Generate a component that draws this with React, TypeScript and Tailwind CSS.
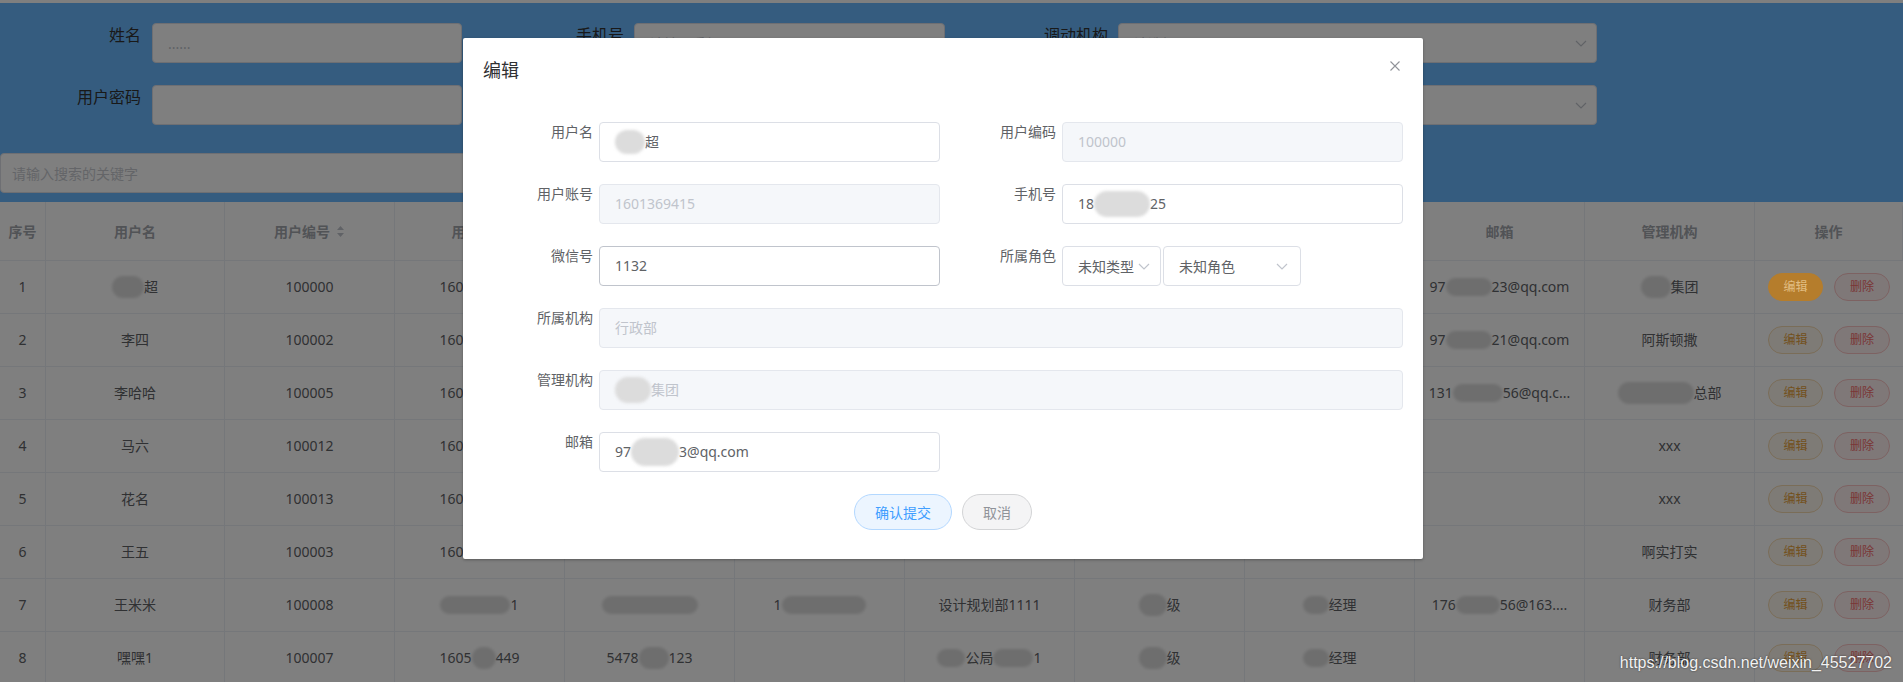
import React from "react";

type Cell = React.ReactNode;

function Blur({ w, h = "h-[18px]" }: { w: string; h?: string }) {
  return <span className={`inline-block shrink-0 rounded-full bg-[#dcdcdc] align-middle blur-[1.5px] ${w} ${h}`} />;
}

function Chevron() {
  return (
    <svg width="12" height="7" viewBox="0 0 12 7" className="shrink-0">
      <path d="M1 1l5 5 5-5" fill="none" stroke="#c0c4cc" strokeWidth="1.2" />
    </svg>
  );
}

function SortIcon() {
  return (
    <svg width="9" height="13" viewBox="0 0 9 13" className="ml-[6px]">
      <path d="M4.5 1L8 5H1z" fill="#c0c4cc" />
      <path d="M4.5 12L8 8H1z" fill="#c0c4cc" />
    </svg>
  );
}

function Field({ label, wide, children }: { label: string; wide?: boolean; children: React.ReactNode }) {
  return (
    <div className={`flex ${wide ? "w-[926px]" : "w-[463px]"}`}>
      <label className="w-[122px] shrink-0 pr-[6px] text-right leading-5 text-[#606266]">{label}</label>
      <div className="flex-1">{children}</div>
    </div>
  );
}

function Box({ disabled, dark, children }: { disabled?: boolean; dark?: boolean; children?: React.ReactNode }) {
  const tone = disabled
    ? "border-[#e4e7ed] bg-[#f5f7fa] text-[#c0c4cc]"
    : dark
    ? "border-[#c0c4cc] bg-white text-[#606266]"
    : "border-[#dcdfe6] bg-white text-[#606266]";
  return (
    <div className={`flex h-[40px] items-center whitespace-nowrap rounded-[4px] border px-[15px] leading-5 ${tone}`}>{children}</div>
  );
}

const headers = ["序号", "用户名", "用户编号", "用户账号", "微信号", "手机号", "所属机构", "用户类型", "用户角色", "邮箱", "管理机构", "操作"];

const rows: Cell[][] = [
  ["1", <><Blur w="w-[32px]" h="h-[22px]" />超</>, "100000", "1601369415", "1132", "181****25", "行政部", "未知类型", "未知角色", <>97<Blur w="w-[46px]" />23@qq.com</>, <><Blur w="w-[30px]" h="h-[22px]" />集团</>],
  ["2", "李四", "100002", "1601369416", "1133", "138****21", "行政部", "普通用户", "员工", <>97<Blur w="w-[46px]" />21@qq.com</>, "阿斯顿撒"],
  ["3", "李哈哈", "100005", "1601369418", "5563", "131****56", "人事部", "普通用户", "员工", <>131<Blur w="w-[50px]" />56@qq.c...</>, <><Blur w="w-[76px]" h="h-[22px]" />总部</>],
  ["4", "马六", "100012", "1601369420", "", "", "财务部", "普通用户", "员工", "", "xxx"],
  ["5", "花名", "100013", "1601369421", "", "", "财务部", "普通用户", "员工", "", "xxx"],
  ["6", "王五", "100003", "1601369417", "", "", "行政部", "普通用户", "员工", "", "啊实打实"],
  ["7", "王米米", "100008", <><Blur w="w-[70px]" />1</>, <Blur w="w-[96px]" />, <>1<Blur w="w-[84px]" /></>, "设计规划部1111", <><Blur w="w-[28px]" h="h-[22px]" />级</>, <><Blur w="w-[26px]" />经理</>, <>176<Blur w="w-[44px]" />56@163....</>, "财务部"],
  ["8", "嘿嘿1", "100007", <>1605<Blur w="w-[24px]" h="h-[22px]" />449</>, <>5478<Blur w="w-[30px]" h="h-[22px]" />123</>, "", <><Blur w="w-[28px]" />公局<Blur w="w-[40px]" />1</>, <><Blur w="w-[28px]" h="h-[22px]" />级</>, <><Blur w="w-[26px]" />经理</>, "", "财务部"],
];

const grid = "grid grid-cols-[46px_179px_repeat(9,170px)_148px]";

export default function App() {
  return (
    <div className="relative h-[682px] w-full overflow-hidden bg-white font-['Noto_Sans','Noto_Sans_CJK_SC',sans-serif] text-[14px]">
      <div className="h-[3px] bg-white" />

      {/* search area */}
      <div className="h-[199px] bg-[#6bb9ff] pt-[20px]">
        <div className="flex h-[40px]">
          <span className="w-[141px] text-right text-[16px] leading-6 text-[#333]">姓名</span>
          <div className="ml-[11px] flex w-[310px] items-center rounded-[4px] border border-[#dcdfe6] bg-white px-[15px] text-[#c0c4cc]">......</div>
          <span className="w-[162px] text-right text-[16px] leading-6 text-[#333]">手机号</span>
          <div className="ml-[10px] flex w-[311px] items-center rounded-[4px] border border-[#dcdfe6] bg-white px-[15px] text-[#c0c4cc]">请输入手机号码</div>
          <span className="w-[163px] text-right text-[16px] leading-6 text-[#333]">调动机构</span>
          <div className="ml-[10px] flex w-[479px] items-center justify-between rounded-[4px] border border-[#dcdfe6] bg-white pl-[15px] pr-[9px] text-[#c0c4cc]">
            请选择
            <Chevron />
          </div>
        </div>
        <div className="mt-[22px] flex h-[40px]">
          <span className="w-[141px] text-right text-[16px] leading-6 text-[#333]">用户密码</span>
          <div className="ml-[11px] w-[310px] rounded-[4px] border border-[#dcdfe6] bg-white" />
          <span className="w-[162px] text-right text-[16px] leading-6 text-[#333]">所属角色</span>
          <div className="ml-[10px] w-[311px] rounded-[4px] border border-[#dcdfe6] bg-white" />
          <span className="w-[163px] text-right text-[16px] leading-6 text-[#333]">所属机构</span>
          <div className="ml-[10px] flex w-[479px] items-center justify-end rounded-[4px] border border-[#dcdfe6] bg-white pr-[9px]">
            <Chevron />
          </div>
        </div>
        <div className="mt-[28px] flex h-[40px] w-[945px] items-center rounded-[4px] border border-[#dcdfe6] bg-white px-[11px] text-[#c8cbd1]">
          请输入搜索的关键字
        </div>
      </div>

      {/* table */}
      <div className="overflow-hidden rounded-t-[6px] bg-white text-[#606266]">
        <div className={`${grid} h-[59px] font-bold text-[#a3a6ad]`}>
          {headers.map((h, i) => (
            <div key={h} className="flex items-center justify-center border-b border-r border-[#ebeef5]">
              {h}
              {i === 2 && <SortIcon />}
            </div>
          ))}
        </div>
        {rows.map((r, ri) => (
          <div key={ri} className={`${grid} h-[53px]`}>
            {r.map((c, ci) => (
              <div key={ci} className="flex items-center justify-center whitespace-nowrap border-b border-r border-[#ebeef5] leading-5">
                {c}
              </div>
            ))}
            <div className="flex items-center justify-center gap-[11px] border-b border-[#ebeef5] text-[12px]">
              {ri === 0 ? (
                <button className="relative z-[45] h-[28px] w-[55px] rounded-full border border-[#b57d2c] bg-[#b57d2c] text-[#e2bd83]">编辑</button>
              ) : (
                <button className="h-[28px] w-[55px] rounded-full border border-[#f5dab1] bg-[#fdf6ec] text-[#e6a23c]">编辑</button>
              )}
              <button className="h-[28px] w-[56px] rounded-full border border-[#fbc4c4] bg-[#fef0f0] text-[#f56c6c]">删除</button>
            </div>
          </div>
        ))}
      </div>

      <div className="absolute inset-0 z-40 bg-black/50" />

      {/* edit dialog */}
      <div className="absolute left-[463px] top-[38px] z-50 h-[521px] w-[960px] rounded-[2px] bg-white shadow-[0_1px_3px_rgba(0,0,0,0.3)]">
        <div className="px-[20px] pb-[10px] pt-[20px] text-[18px] leading-6 text-[#303133]">编辑</div>
        <button className="absolute right-[23px] top-[23px]">
          <svg width="10" height="10" viewBox="0 0 10 10">
            <path d="M0.5 0.5l9 9M9.5 0.5l-9 9" stroke="#909399" strokeWidth="1.1" />
          </svg>
        </button>

        <div className="ml-[14px] w-[926px] pt-[30px]">
          <div className="mb-[22px] flex">
            <Field label="用户名">
              <Box>
                <Blur w="w-[30px]" h="h-[24px]" />超
              </Box>
            </Field>
            <Field label="用户编码">
              <Box disabled>100000</Box>
            </Field>
          </div>
          <div className="mb-[22px] flex">
            <Field label="用户账号">
              <Box disabled>1601369415</Box>
            </Field>
            <Field label="手机号">
              <Box>
                18<Blur w="w-[56px]" h="h-[26px]" />25
              </Box>
            </Field>
          </div>
          <div className="mb-[22px] flex">
            <Field label="微信号">
              <Box dark>1132</Box>
            </Field>
            <Field label="所属角色">
              <div className="flex gap-[2px]">
                <div className="flex h-[40px] w-[99px] items-center justify-between overflow-hidden whitespace-nowrap rounded-[4px] border border-[#dcdfe6] pl-[15px] pr-[10px] text-[#606266]">
                  未知类型
                  <Chevron />
                </div>
                <div className="flex h-[40px] w-[138px] items-center justify-between rounded-[4px] border border-[#dcdfe6] pl-[15px] pr-[12px] text-[#606266]">
                  未知角色
                  <Chevron />
                </div>
              </div>
            </Field>
          </div>
          <div className="mb-[22px]">
            <Field label="所属机构" wide>
              <Box disabled>行政部</Box>
            </Field>
          </div>
          <div className="mb-[22px]">
            <Field label="管理机构" wide>
              <Box disabled>
                <Blur w="w-[36px]" h="h-[26px]" />集团
              </Box>
            </Field>
          </div>
          <div className="mb-[22px]">
            <Field label="邮箱">
              <Box>
                97<Blur w="w-[48px]" h="h-[28px]" />3@qq.com
              </Box>
            </Field>
          </div>
        </div>

        <div className="flex justify-center gap-[10px]">
          <button className="h-[36px] rounded-full border border-[#b3d8ff] bg-[#ecf5ff] px-[20px] text-[#409eff]">确认提交</button>
          <button className="h-[36px] rounded-full border border-[#d3d4d6] bg-[#f4f4f5] px-[20px] text-[#909399]">取消</button>
        </div>
      </div>

      <div className="absolute bottom-[10px] right-[11px] z-[60] font-['Liberation_Sans',sans-serif] text-[16px] leading-[18px] text-[#f2f2f2] [text-shadow:0_0_2px_rgba(0,0,0,0.6)]">
        https://blog.csdn.net/weixin_45527702
      </div>
    </div>
  );
}
